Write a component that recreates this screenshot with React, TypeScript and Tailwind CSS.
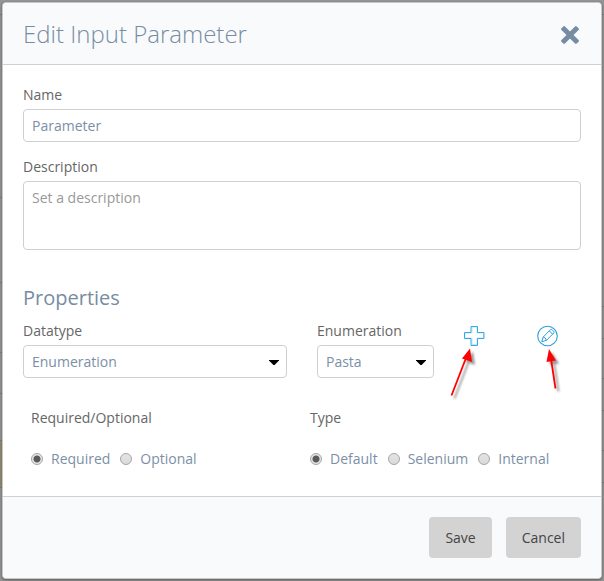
import { useState } from "react";
import type { ReactNode } from "react";

const control =
  "block w-full rounded border border-[#cfcfcf] bg-white px-2 text-sm text-[#7c8fa6] outline-none";

function Field({ id, label, children }: { id: string; label: string; children: ReactNode }) {
  return (
    <div>
      <label htmlFor={id} className="mb-1 block text-sm leading-5 text-[#666]">
        {label}
      </label>
      {children}
    </div>
  );
}

function Select({ id, options }: { id: string; options: string[] }) {
  return (
    <div className="relative">
      <select id={id} className={`${control} h-[33px] appearance-none`}>
        {options.map((o) => (
          <option key={o}>{o}</option>
        ))}
      </select>
      <svg
        className="pointer-events-none absolute top-[15px] right-2"
        width="10"
        height="5"
        viewBox="0 0 10 5"
        aria-hidden="true"
      >
        <path d="M0 0h10v.6L5.600 5H4.400L0 .6z" fill="#000" />
      </svg>
    </div>
  );
}

function RadioGroup({ name, legend, options }: { name: string; legend: string; options: string[] }) {
  const [value, setValue] = useState(options[0]);
  return (
    <fieldset className="px-2">
      <legend className="text-sm leading-5 text-[#666]">{legend}</legend>
      <div className="flex gap-2.5 pt-[21px]">
        {options.map((o) => (
          <label key={o} className="flex items-center gap-2 text-sm leading-5 text-[#7c8fa6]">
            <input
              type="radio"
              name={name}
              checked={value === o}
              onChange={() => setValue(o)}
              className="size-3 appearance-none rounded-full border border-[#a5a5a5] bg-linear-to-b from-[#e4e4e4] to-[#dadada] checked:bg-[radial-gradient(circle,#5a5a5a_0_3px,#e6e6e6_4px)]"
            />
            {o}
          </label>
        ))}
      </div>
    </fieldset>
  );
}

function Backdrop() {
  return (
    <div className="absolute inset-0 flex justify-between bg-[#959595]" aria-hidden="true">
      <div className="w-1">
        <div className="h-[15px] border-b border-[#7e7e7e]" />
        <div className="h-[183px] border-b border-[#7e7e7e]" />
        <div className="h-[85px] border-b border-[#7e7e7e]" />
        <div className="h-[70px] border-b border-[#7e7e7e]" />
        <div className="h-[41px] border-b border-[#7e7e7e]" />
        <div className="h-[47px] border-b border-[#7e7e7e]" />
        <div className="h-[47px] border-b border-[#7e7e7e] bg-[#978c70]" />
      </div>
      <div className="w-1">
        <div className="h-[15px] border-b border-[#7e7e7e]" />
        <div className="h-[292px] border-b border-[#7e7e7e]" />
        <div className="h-8 border-b border-[#7e7e7e]" />
        <div className="h-10 border-b border-[#7e7e7e]" />
        <div className="h-8 border-b border-[#7e7e7e]" />
        <div className="h-10 border-b border-[#7e7e7e]" />
        <div className="h-8 border-b border-[#7e7e7e]" />
      </div>
    </div>
  );
}

function CloseIcon() {
  return (
    <svg width="18" height="18" viewBox="0 0 18 18" fill="#778ca2" aria-hidden="true">
      <rect x="-1.8" y="6.5" width="21.6" height="5" rx="1.2" transform="rotate(45 9 9)" />
      <rect x="-1.8" y="6.5" width="21.6" height="5" rx="1.2" transform="rotate(-45 9 9)" />
    </svg>
  );
}

function PlusIcon() {
  return (
    <svg width="22" height="22" viewBox="0 0 22 22" fill="none" aria-hidden="true">
      <path d="M8 2h5v6h6.500v5H13v6.500H8V13H1V8h7z" stroke="#c4e6f7" />
      <path d="M7 1.500h6.500V7.500h6.500V13.500h-6.500V20.500H7V13.500H.500V7.500H7z" stroke="#36a9e1" />
    </svg>
  );
}

function PencilIcon() {
  return (
    <svg width="22" height="22" viewBox="0 0 22 22" fill="none" stroke="#2b9fdc" aria-hidden="true">
      <circle cx="10.5" cy="11" r="9.8" strokeWidth="1.1" />
      <g strokeWidth="1" strokeLinejoin="round">
        <path d="M4.800 16.800l1.400-4.800 7.300-7.300q.8-.7 1.600 0l1.700 1.700q.7.8 0 1.600l-7.300 7.300z" />
        <path d="M6.200 12q2.200.2 3.300 3.300M12.300 5.900l3.300 3.300" />
      </g>
    </svg>
  );
}

function Arrow({ points, line, className }: { points: string; line: string; className: string }) {
  return (
    <svg
      className={`pointer-events-none absolute overflow-visible drop-shadow-[3px_3px_1px_rgba(0,0,0,0.4)] ${className}`}
      width="24"
      height="50"
      viewBox="0 0 24 50"
      aria-hidden="true"
    >
      <path d={line} stroke="#f00" strokeWidth="1.8" />
      <polygon points={points} fill="#f00" />
    </svg>
  );
}

export default function App() {
  return (
    <div className="relative flex min-h-screen flex-col p-0.5 font-['Open_Sans',sans-serif]">
      <Backdrop />
      <div
        role="dialog"
        aria-labelledby="dialog-title"
        className="relative flex grow flex-col overflow-hidden rounded border border-[#c8c8c8] bg-white shadow-[0_1px_3px_rgba(0,0,0,0.4)]"
      >
        <header className="flex items-center justify-between border-b border-[#cfd1d3] bg-[#f9fafc] px-5 pt-[15px] pb-3.5">
          <h1 id="dialog-title" className="text-2xl font-light text-[#778ca2]">
            Edit Input Parameter
          </h1>
          <button type="button" aria-label="Close" className="pt-0.5 pr-0.5">
            <CloseIcon />
          </button>
        </header>

        <main className="grow px-5 pt-5 pb-[27px]">
          <div className="flex flex-col gap-[15px]">
            <Field id="name" label="Name">
              <input id="name" type="text" defaultValue="Parameter" className={`${control} h-[33px]`} />
            </Field>
            <Field id="description" label="Description">
              <textarea
                id="description"
                placeholder="Set a description"
                className={`${control} h-[69px] resize-none py-1.5 leading-5 placeholder:text-[#999]`}
              />
            </Field>
          </div>

          <h2 className="mt-[34px] mb-[9px] text-xl leading-7 text-[#778ca2]">Properties</h2>
          <div className="grid grid-cols-[264fr_117fr_117fr] gap-[30px]">
            <Field id="datatype" label="Datatype">
              <Select id="datatype" options={["Enumeration", "Text", "Number"]} />
            </Field>
            <Field id="enumeration" label="Enumeration">
              <Select id="enumeration" options={["Pasta", "Pizza"]} />
            </Field>
            <div className="relative flex items-start justify-between pt-1 pr-[22px]">
              <button type="button" aria-label="Add enumeration">
                <PlusIcon />
              </button>
              <button type="button" aria-label="Edit enumeration">
                <PencilIcon />
              </button>
              <Arrow className="top-7 -left-3" line="M-.5 46.500L14 9" points="18,-.5 20,13 10,9.500" />
              <Arrow className="top-7 left-20" line="M11.500 39.500L7 10" points="5,0 12,11.500 2.500,13" />
            </div>
          </div>

          <div className="mt-[30px] grid grid-cols-2">
            <RadioGroup name="required" legend="Required/Optional" options={["Required", "Optional"]} />
            <RadioGroup name="type" legend="Type" options={["Default", "Selenium", "Internal"]} />
          </div>
        </main>

        <footer className="flex justify-end gap-3.5 border-t border-[#cfd1d3] bg-[#f9fafc] p-5">
          <button type="button" className="h-[41px] rounded bg-[#d3d3d3] px-4 text-sm text-[#444]">
            Save
          </button>
          <button type="button" className="h-[41px] rounded bg-[#d3d3d3] px-4 text-sm text-[#444]">
            Cancel
          </button>
        </footer>
      </div>
    </div>
  );
}
